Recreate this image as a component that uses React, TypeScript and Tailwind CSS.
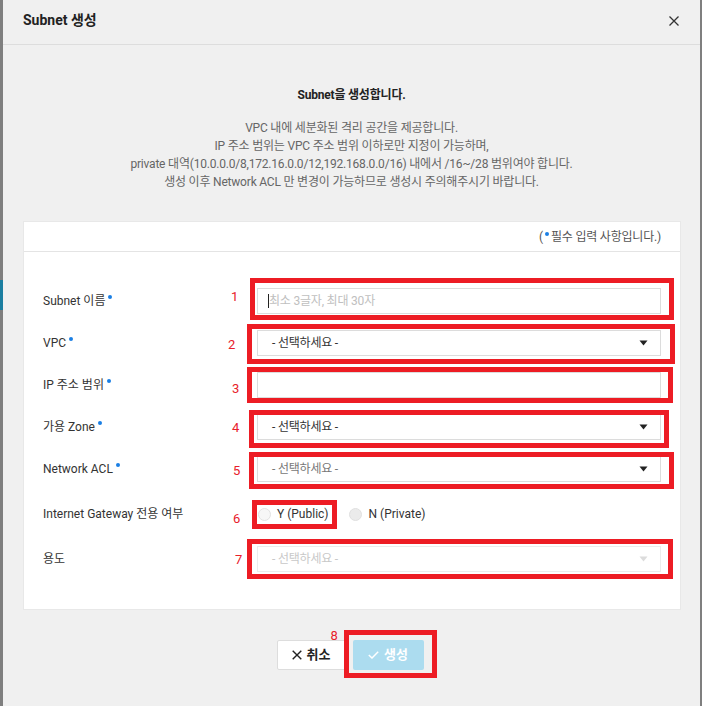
import React from "react";

const RED = "border-[5px] border-[#ed1c24]";

function Dot() {
  return <span className="inline-block w-[4px] h-[4px] rounded-full bg-[#1a7fe4] ml-[3px] relative top-[-4px]" />;
}

function Num({ n, cls }: { n: string; cls: string }) {
  return <span className={`absolute text-[13px] leading-[13px] text-[#e8202a] ${cls}`}>{n}</span>;
}

function Arrow({ disabled }: { disabled?: boolean }) {
  return (
    <svg width="9" height="6" viewBox="0 0 9 6" className="shrink-0">
      <path d="M0.5 0.5 L8.5 0.5 L4.5 5.5 Z" fill={disabled ? "#dcdcdc" : "#222"} />
    </svg>
  );
}

function Select({ tone }: { tone: "dark" | "gray" | "disabled" }) {
  const txt = tone === "dark" ? "text-[#333]" : tone === "gray" ? "text-[#777]" : "text-[#c8c8c8]";
  const border = tone === "disabled" ? "border-[#ececec]" : "border-[#dcdcdc]";
  return (
    <div className={`h-[26px] w-full border ${border} bg-white flex items-center justify-between pl-[14px] pr-[12px]`}>
      <span className={`text-[12px] tracking-[-0.2px] ${txt}`}>- 선택하세요 -</span>
      <Arrow disabled={tone === "disabled"} />
    </div>
  );
}

function Row({ label, req, children, h = "h-[26px]" }: { label: string; req?: boolean; children: React.ReactNode; h?: string }) {
  return (
    <div className={`flex items-center ${h}`}>
      <div className="w-[214px] text-[12px] text-[#333] flex items-center">
        <span>{label}</span>
        {req && <Dot />}
      </div>
      <div className="relative w-[404px] h-full flex items-center">{children}</div>
    </div>
  );
}

export default function App() {
  return (
    <div className="w-[702px] h-[706px] bg-[#7f7f7f] flex overflow-hidden font-['Roboto','Noto_Sans_CJK_KR',sans-serif]">
      <div className="w-[3px] shrink-0 flex flex-col">
        <div className="h-[280px]" />
        <div className="h-[30px] bg-[#1b7ea0]" />
      </div>
      <div className="w-[697px] shrink-0 bg-[#f0f0f0] flex flex-col">
        <div className="h-[45px] border-b border-[#dddddd] flex items-center justify-between pl-[20px] pr-[21px] pb-[3px]">
          <span className="text-[14px] font-bold text-[#222]">Subnet 생성</span>
          <svg width="10" height="10" viewBox="0 0 10 10">
            <path d="M0.5 0.5 L9.5 9.5 M9.5 0.5 L0.5 9.5" stroke="#333" strokeWidth="1.3" />
          </svg>
        </div>
        <div className="flex flex-col items-center pt-[41px] tracking-[-0.2px]">
          <div className="text-[12px] leading-[18px] font-bold text-[#222]">Subnet을 생성합니다.</div>
          <div className="mt-[15px] text-[12px] leading-[18px] text-[#666] text-center">
            <div>VPC 내에 세분화된 격리 공간을 제공합니다.</div>
            <div>IP 주소 범위는 VPC 주소 범위 이하로만 지정이 가능하며,</div>
            <div>private 대역(10.0.0.0/8,172.16.0.0/12,192.168.0.0/16) 내에서 /16~/28 범위여야 합니다.</div>
            <div>생성 이후 Network ACL 만 변경이 가능하므로 생성시 주의해주시기 바랍니다.</div>
          </div>
        </div>
        <div className="mt-[30px] ml-[20px] w-[658px] h-[389px] bg-white border border-[#e8e8e8] flex flex-col">
          <div className="h-[30px] border-b border-[#e4e4e4] flex items-center justify-end pr-[19px] text-[12px] text-[#555] tracking-[-0.2px]">
            <span>(</span>
            <span className="inline-block w-[4px] h-[4px] rounded-full bg-[#1a7fe4] mx-[2px] relative top-[-3px]" />
            <span>필수 입력 사항입니다.)</span>
          </div>
          <div className="flex flex-col gap-[16px] pt-[36px] pl-[19px]">
            <Row label="Subnet 이름" req>
              <div className="h-[26px] w-full border border-[#dcdcdc] bg-white flex items-center pl-[10px]">
                <span className="w-[1px] h-[14px] bg-[#222]" />
                <span className="text-[12px] text-[#c0c0c0] tracking-[-0.2px]">최소 3글자, 최대 30자</span>
              </div>
              <div className={`absolute left-[-7px] top-[-10px] right-[-13px] bottom-[-6px] ${RED}`} />
              <Num n="1" cls="left-[-26px] top-[2px]" />
            </Row>
            <Row label="VPC" req>
              <Select tone="dark" />
              <div className={`absolute left-[-10px] top-[-6px] right-[-14px] bottom-[-8px] ${RED}`} />
              <Num n="2" cls="left-[-29px] top-[8px]" />
            </Row>
            <Row label="IP 주소 범위" req>
              <div className="h-[26px] w-full border border-[#dcdcdc] bg-white" />
              <div className={`absolute left-[-10px] top-[-5px] right-[-12px] bottom-[-5px] ${RED}`} />
              <Num n="3" cls="left-[-25px] top-[10px]" />
            </Row>
            <Row label="가용 Zone" req>
              <Select tone="dark" />
              <div className={`absolute left-[-8px] top-[-4px] right-[-8px] bottom-[-8px] ${RED}`} />
              <Num n="4" cls="left-[-25px] top-[7px]" />
            </Row>
            <Row label="Network ACL" req>
              <Select tone="gray" />
              <div className={`absolute left-[-8px] top-[-4px] right-[-13px] bottom-[-7px] ${RED}`} />
              <Num n="5" cls="left-[-24px] top-[8px]" />
            </Row>
            <Row label="Internet Gateway 전용 여부" h="h-[32px]">
              <div className="flex items-center gap-[20px] text-[12px] text-[#333] pl-[1px]">
                <div className="relative flex items-center h-[26px]">
                  <span className="w-[13px] h-[13px] rounded-full border border-[#e2e2e2] bg-[#f7f7f7] mr-[6px]" />
                  <span>Y (Public)</span>
                  <div className={`absolute left-[-6px] right-[-8px] top-[-1px] bottom-[-2px] ${RED}`} />
                </div>
                <div className="flex items-center h-[26px]">
                  <span className="w-[13px] h-[13px] rounded-full border border-[#e0e0e0] bg-[#ebebeb] mr-[7px]" />
                  <span>N (Private)</span>
                </div>
              </div>
              <Num n="6" cls="left-[-24px] top-[14px]" />
            </Row>
            <Row label="용도">
              <Select tone="disabled" />
              <div className={`absolute left-[-10px] top-[-7px] right-[-12px] bottom-[-7px] ${RED}`} />
              <Num n="7" cls="left-[-22px] top-[7px]" />
            </Row>
          </div>
        </div>
        <div className="mt-[30px] flex justify-center gap-[7px] pr-[3px]">
          <div className="w-[69px] h-[30px] bg-white border border-[#dddddd] rounded-[2px] flex items-center justify-center gap-[5px] text-[13px] font-bold text-[#222]">
            <svg width="10" height="10" viewBox="0 0 10 10">
              <path d="M0.7 0.7 L9.3 9.3 M9.3 0.7 L0.7 9.3" stroke="#222" strokeWidth="1.4" />
            </svg>
            <span>취소</span>
          </div>
          <div className="relative w-[71px] h-[30px] bg-[#acdcef] rounded-[2px] flex items-center justify-center gap-[5px] text-[13px] font-bold text-white">
            <svg width="11" height="8" viewBox="0 0 11 8">
              <path d="M0.8 4 L4 7 L10.2 0.8" stroke="#fff" strokeWidth="1.5" fill="none" />
            </svg>
            <span>생성</span>
            <div className={`absolute left-[-9px] top-[-10px] right-[-13px] bottom-[-8px] ${RED}`} />
            <Num n="8" cls="left-[-22px] top-[-11px] font-normal" />
          </div>
        </div>
      </div>
      <div className="w-[2px] shrink-0" />
    </div>
  );
}
